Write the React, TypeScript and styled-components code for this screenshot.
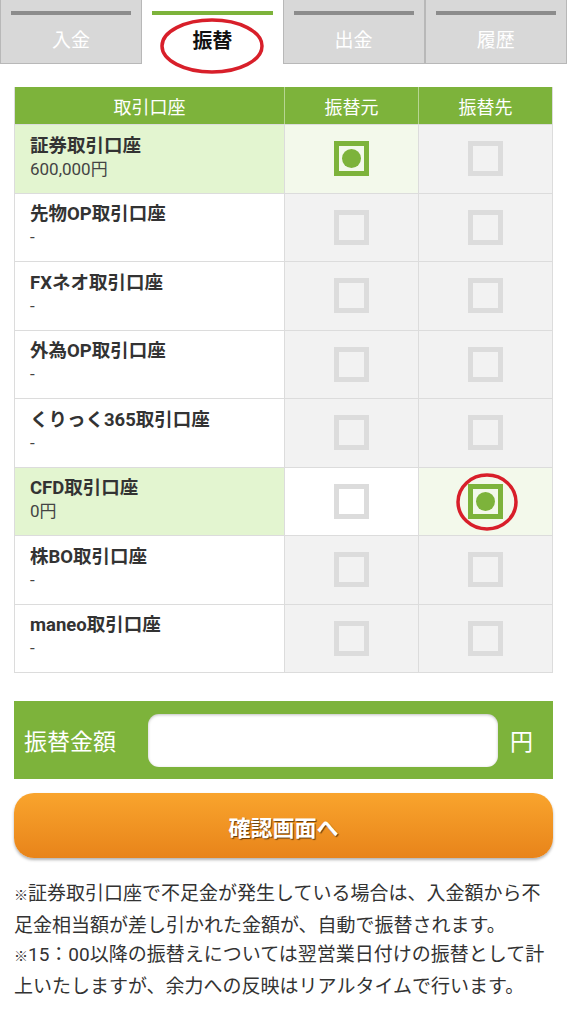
import React from "react"
import styled, { createGlobalStyle } from "styled-components"

const GlobalStyle = createGlobalStyle`
    body {
        margin: 0;
        background: #fff;
        font-family: Roboto, "Noto Sans CJK JP", sans-serif;
        color: #333;
    }
`

const green = "#7db33b"

const Page = styled.div`
    width: 567px;
    background: #fff;
`

const Tabs = styled.div`
    display: flex;
    height: 64px;
`

const Tab = styled.div<{ active?: boolean }>`
    position: relative;
    flex: 1;
    display: flex;
    align-items: center;
    justify-content: center;
    padding-top: 14px;
    box-sizing: border-box;
    font-size: ${({ active }) => (active ? "20px" : "19px")};
    background: ${({ active }) => (active ? "#fff" : "#d8d8d8")};
    color: ${({ active }) => (active ? "#111" : "#fff")};
    font-weight: ${({ active }) => (active ? 700 : 400)};
    border: ${({ active }) => (active ? "none" : "1px solid #b8b8b8")};
    border-top: none;
    &::before {
        content: "";
        position: absolute;
        top: 11px;
        left: 10px;
        right: 10px;
        height: 4px;
        background: ${({ active }) => (active ? green : "#8c8c8c")};
    }
`

const Mark = styled.svg`
    position: absolute;
    pointer-events: none;
    overflow: visible;
`

const Table = styled.div`
    margin: 23px 14px 0;
    display: grid;
    grid-template-columns: 269px 134px 1fr;
    border: 1px solid #dcdcdc;
    border-top: none;
`

const HeadCell = styled.div`
    height: 37px;
    background: ${green};
    color: #fff;
    font-size: 18px;
    display: flex;
    align-items: center;
    justify-content: center;
    border-left: 1px solid rgba(255, 255, 255, 0.45);
    &:first-child {
        border-left: none;
    }
`

const LabelCell = styled.div<{ selected?: boolean }>`
    height: 68.5px;
    box-sizing: border-box;
    padding: 0 0 2px 15px;
    display: flex;
    flex-direction: column;
    justify-content: center;
    background: ${({ selected }) => (selected ? "#e3f5d0" : "#fff")};
    border-top: 1px solid #dcdcdc;
`

const Name = styled.div`
    font-size: 18.5px;
    font-weight: 700;
    line-height: 23px;
    color: #333;
`

const Amount = styled.div`
    font-size: 17px;
    line-height: 23px;
    color: #444;
`

const BoxCell = styled.div<{ tone: "off" | "on" | "sel" }>`
    position: relative;
    height: 68.5px;
    box-sizing: border-box;
    display: flex;
    align-items: center;
    justify-content: center;
    border-top: 1px solid #dcdcdc;
    border-left: 1px solid #dcdcdc;
    background: ${({ tone }) => (tone === "off" ? "#f2f2f2" : tone === "sel" ? "#f3f9eb" : "#fff")};
`

const Check = styled.div<{ checked?: boolean }>`
    width: 35px;
    height: 35px;
    box-sizing: border-box;
    border: 5px solid ${({ checked }) => (checked ? green : "#dcdcdc")};
    display: flex;
    align-items: center;
    justify-content: center;
    &::after {
        content: "";
        display: ${({ checked }) => (checked ? "block" : "none")};
        width: 19px;
        height: 19px;
        border-radius: 50%;
        background: ${green};
    }
`

const AmountBar = styled.div`
    margin: 28px 14px 0;
    height: 78px;
    background: ${green};
    display: flex;
    align-items: center;
    padding: 0 18px 0 10px;
    gap: 12px;
    color: #fff;
    font-size: 23px;
`

const AmountLabel = styled.div`
    width: 112px;
`

const Input = styled.div`
    width: 350px;
    height: 53px;
    border-radius: 11px;
    background: #fff;
    box-shadow: inset 0 1px 3px rgba(0, 0, 0, 0.25);
`

const Button = styled.div`
    margin: 14px 14px 0;
    height: 65px;
    border-radius: 20px;
    background: linear-gradient(#f9a42d, #e8841a);
    box-shadow: 0 2px 3px rgba(0, 0, 0, 0.3);
    display: flex;
    align-items: center;
    justify-content: center;
    color: #fff;
    font-size: 22px;
    font-weight: 700;
    text-shadow: 1px 1px 1px rgba(0, 0, 0, 0.6);
`

const Notes = styled.div`
    margin: 21px 14px 0;
    font-size: 19px;
    line-height: 29.5px;
    color: #333;
`

const Kome = styled.span`
    font-size: 14px;
`

type Tone = "off" | "on" | "sel"

const rows: { name: string; amount: string; selected?: boolean; from: Tone; to: Tone; fromChecked?: boolean; toChecked?: boolean; circled?: boolean }[] = [
    { name: "証券取引口座", amount: "600,000円", selected: true, from: "sel", to: "off", fromChecked: true },
    { name: "先物OP取引口座", amount: "-", from: "off", to: "off" },
    { name: "FXネオ取引口座", amount: "-", from: "off", to: "off" },
    { name: "外為OP取引口座", amount: "-", from: "off", to: "off" },
    { name: "くりっく365取引口座", amount: "-", from: "off", to: "off" },
    { name: "CFD取引口座", amount: "0円", selected: true, from: "on", to: "sel", toChecked: true, circled: true },
    { name: "株BO取引口座", amount: "-", from: "off", to: "off" },
    { name: "maneo取引口座", amount: "-", from: "off", to: "off" },
]

const tabs = ["入金", "振替", "出金", "履歴"]

const App: React.FunctionComponent = () => {
    return (
        <>
            <GlobalStyle />
            <Page>
                <Tabs>
                    {tabs.map((t, i) => (
                        <Tab key={t} active={i === 1}>
                            {t}
                            {i === 1 && (
                                <Mark width="104" height="56" style={{ left: 18, top: 18 }}>
                                    <ellipse cx="52" cy="28" rx="50" ry="26" fill="none" stroke="#d81f2a" strokeWidth="3.5" />
                                </Mark>
                            )}
                        </Tab>
                    ))}
                </Tabs>

                <Table>
                    <HeadCell>取引口座</HeadCell>
                    <HeadCell>振替元</HeadCell>
                    <HeadCell>振替先</HeadCell>
                    {rows.map((r) => (
                        <React.Fragment key={r.name}>
                            <LabelCell selected={r.selected}>
                                <Name>{r.name}</Name>
                                <Amount>{r.amount}</Amount>
                            </LabelCell>
                            <BoxCell tone={r.from}>
                                <Check checked={r.fromChecked} />
                            </BoxCell>
                            <BoxCell tone={r.to}>
                                <Check checked={r.toChecked} />
                                {r.circled && (
                                    <Mark width="62" height="58" style={{ left: 37, top: 5 }}>
                                        <ellipse cx="31" cy="29" rx="29" ry="27" fill="none" stroke="#d81f2a" strokeWidth="3.5" />
                                    </Mark>
                                )}
                            </BoxCell>
                        </React.Fragment>
                    ))}
                </Table>

                <AmountBar>
                    <AmountLabel>振替金額</AmountLabel>
                    <Input />
                    <span>円</span>
                </AmountBar>

                <Button>確認画面へ</Button>

                <Notes>
                    <Kome>※</Kome>証券取引口座で不足金が発生している場合は、入金額から不足金相当額が差し引かれた金額が、自動で振替されます。
                    <br />
                    <Kome>※</Kome>15：00以降の振替えについては翌営業日付けの振替として計上いたしますが、余力への反映はリアルタイムで行います。
                </Notes>
            </Page>
        </>
    )
}

export default App
